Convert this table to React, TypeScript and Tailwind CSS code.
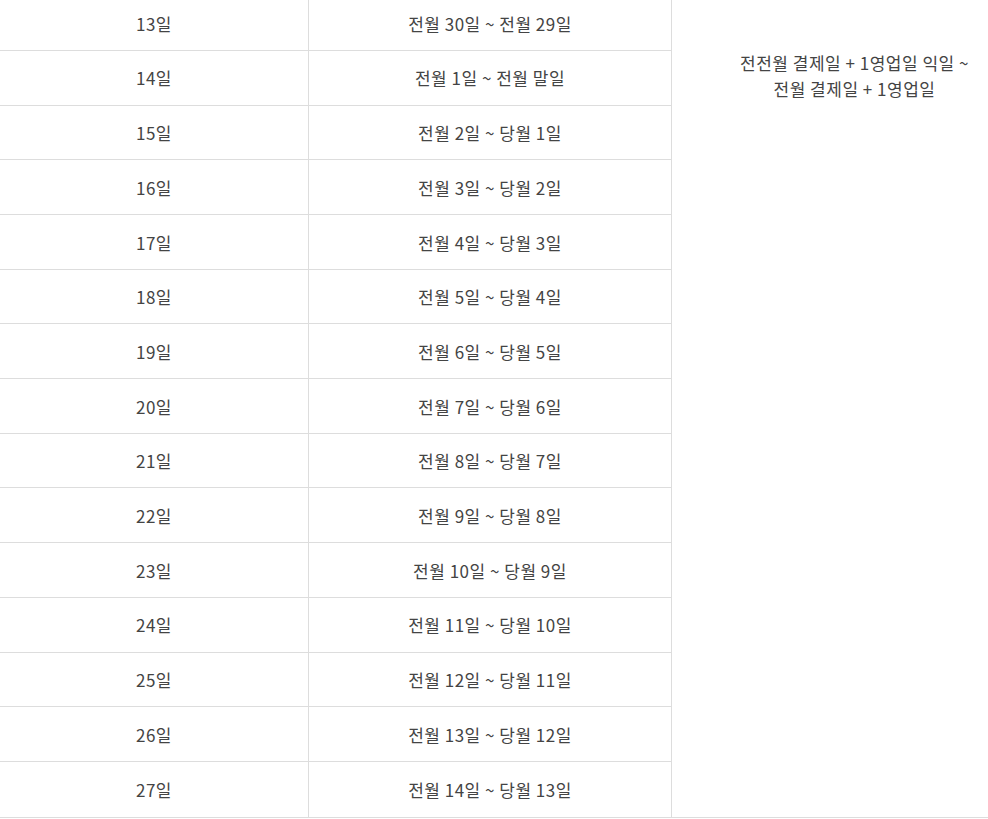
import React from "react";

const rows: [string, string][] = [
  ["13일", "전월 30일 ~ 전월 29일"],
  ["14일", "전월 1일 ~ 전월 말일"],
  ["15일", "전월 2일 ~ 당월 1일"],
  ["16일", "전월 3일 ~ 당월 2일"],
  ["17일", "전월 4일 ~ 당월 3일"],
  ["18일", "전월 5일 ~ 당월 4일"],
  ["19일", "전월 6일 ~ 당월 5일"],
  ["20일", "전월 7일 ~ 당월 6일"],
  ["21일", "전월 8일 ~ 당월 7일"],
  ["22일", "전월 9일 ~ 당월 8일"],
  ["23일", "전월 10일 ~ 당월 9일"],
  ["24일", "전월 11일 ~ 당월 10일"],
  ["25일", "전월 12일 ~ 당월 11일"],
  ["26일", "전월 13일 ~ 당월 12일"],
  ["27일", "전월 14일 ~ 당월 13일"],
];

export default function App() {
  return (
    <div
      className="w-[988px] h-[819px] overflow-hidden bg-white text-[#444] text-[17px] tracking-[0.5px]"
      style={{ fontFamily: '"Noto Sans CJK KR", "Noto Sans", sans-serif' }}
    >
      <div className="flex w-[1037px] -mt-[3.9px] border-b border-[#ddd]">
        <div className="flex flex-col w-[672px] shrink-0">
          {rows.map(([a, b], i) => (
            <div
              key={a}
              className={
                "flex h-[54.71px] " +
                (i < rows.length - 1 ? "border-b border-[#ddd]" : "")
              }
            >
              <div className="w-[309px] shrink-0 border-r border-[#ddd] flex items-center justify-center pt-[1px]">
                {a}
              </div>
              <div className="w-[363px] shrink-0 border-r border-[#ddd] flex items-center justify-center pt-[1px]">
                {b}
              </div>
            </div>
          ))}
        </div>
        <div className="flex-1 flex flex-col items-center pt-[54px] leading-[26px] text-center">
          <div>전전월 결제일 + 1영업일 익일 ~</div>
          <div>전월 결제일 + 1영업일</div>
        </div>
      </div>
    </div>
  );
}
